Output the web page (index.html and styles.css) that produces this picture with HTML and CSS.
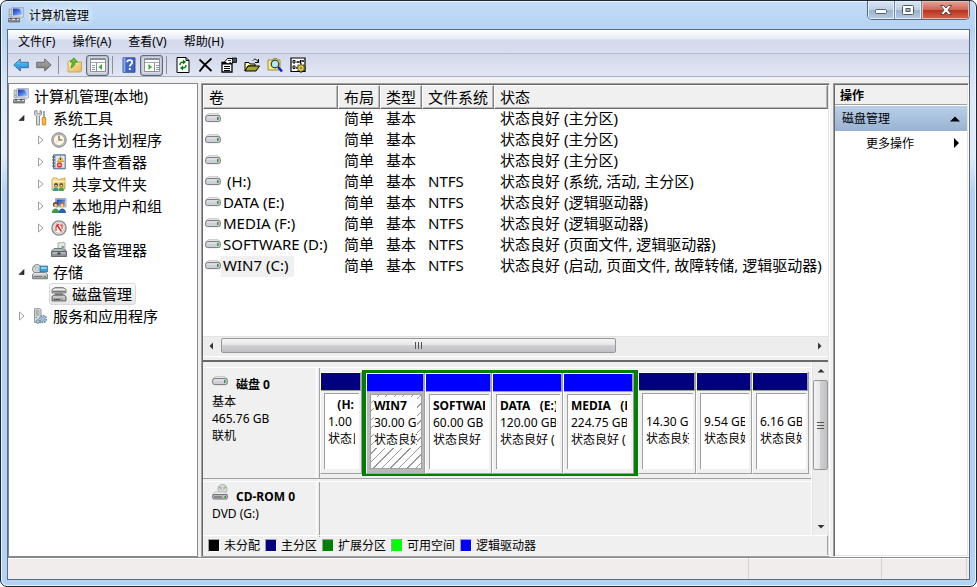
FILE: index.html
```html
<!DOCTYPE html>
<html lang="zh-CN">
<head>
<meta charset="utf-8">
<title>计算机管理</title>
<link rel="stylesheet" href="styles.css">
</head>
<body>
<svg class="sprite" aria-hidden="true">
  <defs>
    <linearGradient id="gBlue" x1="0" y1="0" x2="1" y2="1"><stop offset="0" stop-color="#1530b8"/><stop offset=".5" stop-color="#4a78e0"/><stop offset="1" stop-color="#c8dcff"/></linearGradient>
    <linearGradient id="gArrow" x1="0" y1="0" x2="0" y2="1"><stop offset="0" stop-color="#8fd8fa"/><stop offset=".5" stop-color="#3ba7e6"/><stop offset="1" stop-color="#2f8fd6"/></linearGradient>
    <linearGradient id="gGrey" x1="0" y1="0" x2="0" y2="1"><stop offset="0" stop-color="#b0b0b0"/><stop offset="1" stop-color="#777"/></linearGradient>
    <linearGradient id="gFolder" x1="0" y1="0" x2="1" y2="1"><stop offset="0" stop-color="#fdeeb0"/><stop offset="1" stop-color="#e3b95a"/></linearGradient>
    <linearGradient id="gMetal" x1="0" y1="0" x2="0" y2="1"><stop offset="0" stop-color="#f4f4f6"/><stop offset="1" stop-color="#8c8f94"/></linearGradient>
  </defs>
  <symbol id="computer" viewBox="0 0 16 16">
    <path d="M1 2h3v8H1z" fill="#c9ccd0" stroke="#8a8d92" stroke-width=".6"/><path d="M1.500 7h1v1h-1z" fill="#3b3"/>
    <path d="M4 .5h11.500v9.500H4z" fill="#e4e6ea" stroke="#9a9ea6" stroke-width=".7"/><path d="M5 1.500h9.500v7H5z" fill="url(#gBlue)"/>
    <path d="M11 1.500h3.500v5z" fill="#dfe9ff" opacity=".7"/><path d="M8 10h5l1 1.500H7z" fill="#b9bcc2"/>
    <path d="M.5 11.500h11V15H.5z" fill="#85888c" stroke="#5c5f63" stroke-width=".7"/><path d="M1 12.500h10" stroke="#e2e2e2"/><path d="M3 11v2M8 11v2" stroke="#333"/>
  </symbol>
  <symbol id="tools" viewBox="0 0 16 16">
    <path d="M2.500 1v3.500L4.500 6v9h3V6l2-1.500V1L8 .5v3.300H5V.5z" fill="#d9dbde" stroke="#777b80" stroke-width=".8"/>
    <path d="M12 1v7" stroke="#8a8d92" stroke-width="1.600"/><path d="M10.500 7.500h3L14 9l-.5 6h-3L10 9z" fill="#f3b73b" stroke="#b67a12" stroke-width=".7"/>
  </symbol>
  <symbol id="clock" viewBox="0 0 16 16">
    <circle cx="8" cy="8" r="7.300" fill="#bfc1c4" stroke="#77797d" stroke-width=".8"/><circle cx="8" cy="8" r="5.600" fill="#fff8e2" stroke="#8d8a80" stroke-width=".6"/>
    <path d="M8 3.500V8h3.500" fill="none" stroke="#555" stroke-width="1.100"/><path d="M8 8l-3 2.500" stroke="#c99" stroke-width=".6"/>
  </symbol>
  <symbol id="events" viewBox="0 0 16 16">
    <path d="M2.500.8h11.700v14H2.500z" fill="#a9bdd8" stroke="#4d6894"/><path d="M5 2h8.500v11.500H5z" fill="#dfe7f2"/><path d="M1 3h3M1 6h3M1 9h3M1 12h3" stroke="#555"/>
    <path d="M9.500 2.500l3 5h-6z" fill="#ffd63a" stroke="#a97b00" stroke-width=".6"/><path d="M9.500 4v2" stroke="#222" stroke-width=".8"/>
    <circle cx="8.500" cy="11" r="2.700" fill="#df3a2c"/><path d="M7.500 10l2 2m0-2l-2 2" stroke="#fff" stroke-width=".8"/>
  </symbol>
  <symbol id="shared" viewBox="0 0 16 16">
    <path d="M1 4l1-2h4l1.500 1.500L14 2v11L1 14z" fill="url(#gFolder)" stroke="#c79b3d" stroke-width=".8"/><path d="M2 5.500h12.500" stroke="#fff3c4"/>
    <circle cx="5" cy="9" r="1.900" fill="#4b3a26"/><path d="M2 15c0-5 5.500-5 5.500 0z" fill="#2f9a9a"/><circle cx="10.200" cy="9" r="1.900" fill="#6b4a26"/><path d="M7.700 15c0-5 5.300-5 5.300 0z" fill="#4aa34a"/><circle cx="5" cy="9.800" r="1" fill="#f3cfa4"/><circle cx="10.200" cy="9.800" r="1" fill="#f3cfa4"/>
  </symbol>
  <symbol id="users" viewBox="0 0 16 16">
    <path d="M4.500.5H15v8.500H4.500z" fill="#d9dce2" stroke="#8a8f99" stroke-width=".7"/><path d="M5.500 1.500H14v6.500H5.500z" fill="url(#gBlue)"/>
    <circle cx="4.500" cy="6.500" r="2.600" fill="#6b4423"/><circle cx="4.700" cy="7.300" r="1.600" fill="#f0c79a"/><path d="M.8 15c0-6 7.500-6 7.500 0z" fill="#3f9b46"/>
    <circle cx="11" cy="6.500" r="2.600" fill="#a7742f"/><circle cx="11" cy="7.400" r="1.600" fill="#f6d3a8"/><path d="M7.500 15c0-6 7.500-6 7.500 0z" fill="#2c62b5"/>
  </symbol>
  <symbol id="gauge" viewBox="0 0 16 16">
    <circle cx="8" cy="8" r="7.100" fill="#eee" stroke="#85878a" stroke-width="1.400"/><circle cx="8" cy="8" r="5.200" fill="#fff" stroke="#c9a8a4" stroke-width=".8"/>
    <path d="M5.500 4.500l5 7" stroke="#d22" stroke-width="1.500"/><path d="M5 11V6.500l3-2.500M8.500 5h2.500V9" fill="none" stroke="#d22" stroke-width="1.100"/>
  </symbol>
  <symbol id="device" viewBox="0 0 16 16">
    <path d="M7 1l4-1 3 1v7H7z" fill="#e4e5e8" stroke="#8b8d91" stroke-width=".7"/><path d="M10.500 5h2.500" stroke="#3aa648" stroke-width="1.500"/>
    <path d="M1 8.500l2-2h8l4 2v2H1z" fill="#b3b8bd" stroke="#5f646a" stroke-width=".8"/><path d="M.5 9.500h15v5H.5z" fill="#8c9298" stroke="#4e5358" stroke-width=".8"/><path d="M1.500 11h13" stroke="#d4d7db"/><path d="M6.500 10.500h3v2h-3z" fill="#444"/>
  </symbol>
  <symbol id="storage" viewBox="0 0 16 16">
    <circle cx="5" cy="5" r="4.500" fill="#d5d8dc" stroke="#888"/><circle cx="5" cy="5" r="1.400" fill="#fff" stroke="#888" stroke-width=".6"/><path d="M2 2l2 2" stroke="#4c9"/>
    <path d="M8 2h7.500v6H8z" fill="#39a0dc" stroke="#246b9c" stroke-width=".7"/><path d="M9 4h5.500" stroke="#b4e3fa" stroke-width="1.500"/>
    <path d="M.5 10.500l2-2h11l2 2v4.300H.5z" fill="url(#gMetal)" stroke="#6c6f74" stroke-width=".8"/><path d="M2 12.500h8" stroke="#777"/><path d="M12 12h2v1.500h-2z" fill="#35b035"/>
  </symbol>
  <symbol id="diskmgmt" viewBox="0 0 16 16">
    <path d="M1 3.500l3-2h8l3 2V7H1z" fill="#c4c4c4" stroke="#6a6a6a" stroke-width=".8"/><path d="M2 3.500h12" stroke="#f2f2f2" stroke-width=".9"/><path d="M1.500 5.500h13" stroke="#777"/>
    <path d="M4 7h8v2.500H4z" fill="#888"/><path d="M1 10.500l2-1.500h10l2 1.500V15H1z" fill="#a2a2a2" stroke="#5a5a5a" stroke-width=".8"/><path d="M2 11h12" stroke="#efefef"/><path d="M3 13.500h6" stroke="#555"/><path d="M12 13h2" stroke="#ddd"/>
  </symbol>
  <symbol id="services" viewBox="0 0 16 16">
    <path d="M2.500.8l5-.3 1.500 1v13H2.500z" fill="#d8dce0" stroke="#7e8388" stroke-width=".8"/><path d="M3.500 3h4M3.500 5h4M3.500 7h4" stroke="#8a8f95"/><path d="M3.500 9.500h1.500" stroke="#3b3"/>
    <circle cx="11" cy="11" r="3.400" fill="#b6cde0" stroke="#5f84a5" stroke-width="1.500" stroke-dasharray="1.600 1"/><circle cx="11" cy="11" r="1.300" fill="#fff" stroke="#5f84a5" stroke-width=".8"/><circle cx="6" cy="13.500" r="1.800" fill="#aec5d6" stroke="#6c8ea8"/>
  </symbol>
  <symbol id="drive" viewBox="0 0 16 10">
    <path d="M3 .8h10l2 2H1z" fill="#f2f2f2" stroke="#b0b0b4" stroke-width=".8"/><rect x=".6" y="2.600" width="14.800" height="6" rx="2" fill="#cfcfd8" stroke="#77777c" stroke-width="1"/><path d="M2 4h11" stroke="#eeeef4"/><path d="M12 4h1.600v3H12z" fill="#2f9a2f"/>
  </symbol>
  <symbol id="cdrom" viewBox="0 0 16 16">
    <circle cx="10.500" cy="5" r="4.500" fill="#dcdce0" stroke="#99999e" stroke-width=".8"/><path d="M7 3l3 2M11 5l3-2" stroke="#6c6" stroke-width="1.200"/><circle cx="10.500" cy="5" r="1.300" fill="#fff" stroke="#999" stroke-width=".6"/>
    <path d="M3 8h10l2.500 2.500H.5z" fill="#eee" stroke="#aaa" stroke-width=".6"/><rect x=".6" y="10.500" width="14.800" height="4.500" rx="1.500" fill="#bbbbc2" stroke="#707075"/><path d="M2 13h8" stroke="#555"/><path d="M12.500 12h1.500v2h-1.500z" fill="#2f9a2f"/>
  </symbol>
  <symbol id="back" viewBox="0 0 16 14"><path d="M.8 7l6.500-6v3.300h8v5.400h-8V13z" fill="url(#gArrow)" stroke="#2a6da8" stroke-width=".9"/></symbol>
  <symbol id="forward" viewBox="0 0 16 14"><path d="M15.200 7L8.700 1v3.300h-8v5.400h8V13z" fill="url(#gGrey)" stroke="#666" stroke-width=".9"/></symbol>
  <symbol id="up" viewBox="0 0 16 16"><path d="M1 5l1-1.500h4L7 5h7.500v9L13 15H1z" fill="url(#gFolder)" stroke="#c79b3d" stroke-width=".8"/><path d="M4 11c2.500-1 4-3 4-6h2.500L6.800.8 3 5h2.200c0 2-.4 4-1.200 6z" fill="#5bc236" stroke="#2f8a1a" stroke-width=".7"/></symbol>
  <symbol id="paneLeft" viewBox="0 0 18 16"><path d="M1.500 1.500h15v13h-15z" fill="#fff" stroke="#8a8f98"/><path d="M1.500 2.500h15" stroke="#8a8f98"/><path d="M2 5.500h14" stroke="#a3a8b0"/><path d="M7.500 6v8" stroke="#8a8f98"/><path d="M3 8.500h3M3 10.500h3M3 12.500h3" stroke="#7f9ab8"/><path d="M13 7v6l-3.500-3z" fill="#3aa82d"/></symbol>
  <symbol id="paneRight" viewBox="0 0 18 16"><path d="M1.500 1.500h15v13h-15z" fill="#fff" stroke="#8a8f98"/><path d="M1.500 2.500h15" stroke="#8a8f98"/><path d="M2 5.500h14" stroke="#a3a8b0"/><path d="M11.500 6v8" stroke="#8a8f98"/><path d="M13 8.500h3M13 10.500h3M13 12.500h3" stroke="#7f9ab8"/><path d="M5.500 7v6L9 10z" fill="#3aa82d"/></symbol>
  <symbol id="help" viewBox="0 0 16 16"><path d="M2 .8h12v14.500H2z" fill="#3f67c9" stroke="#27418f" stroke-width=".8"/><path d="M2.500 1h1.800v14H2.500z" fill="#8fb0f2"/><path d="M6.200 5.300c0-3 5-3 5 0C11.200 7.500 8.800 7.300 8.800 9.500M8.800 11v2" fill="none" stroke="#fff" stroke-width="1.800"/></symbol>
  <symbol id="refresh" viewBox="0 0 16 16"><path d="M2 .5h9L14 3.500v12H2z" fill="#fff" stroke="#000"/><path d="M11 .5v3h3" fill="none" stroke="#000"/><path d="M5 8c0-2.500 1-3 4-3M11 8c0 2.500-1 3-4 3" fill="none" stroke="#008000" stroke-width="1.500"/><path d="M8 2.500v5L11 5zM8 8.500v5L5 11z" fill="#008000"/></symbol>
  <symbol id="delete" viewBox="0 0 16 16"><path d="M1.500 2.500l12 11.500M13.500 1.500C9 5 5 9.500 1.500 14.500" fill="none" stroke="#000" stroke-width="1.800"/></symbol>
  <symbol id="props" viewBox="0 0 16 16"><path d="M1 5.500h10v9.500H1z" fill="#fff" stroke="#000" stroke-width="1.300"/><path d="M1 6.500h10" stroke="#000" stroke-width="2"/><path d="M3 9.500h6M3 11.500h6M3 13.500h6" stroke="#000"/><path d="M3.500 5l3-3.500h5l1 2-2 3.500-1-1.500L7 7z" fill="#fff" stroke="#000" stroke-width="1"/><path d="M7 3.500h3" stroke="#000" stroke-width=".8"/><path d="M11 1h4.500v4.500H12z" fill="#4a4e66" stroke="#000" stroke-width=".8"/></symbol>
  <symbol id="open" viewBox="0 0 16 16"><path d="M1 14V5.500h4L6 7h5v2H4z" fill="#ffff9a" stroke="#000"/><path d="M1 14l3-5h11.500L12 14z" fill="#a6a62c" stroke="#000"/><path d="M9 3.500c2-2.500 4-1 5 1.500M14.500 2v3.500H11" fill="none" stroke="#000"/></symbol>
  <symbol id="search" viewBox="0 0 16 16"><path d="M1 3h4l1.500-1.500H10L11 3h2v10H1z" fill="#ffee7d" stroke="#998f35"/><circle cx="8" cy="7" r="3.800" fill="#a8ecff" stroke="#333" stroke-width="1.200"/><path d="M11 10l4 4.500" stroke="#1023c4" stroke-width="2.500"/></symbol>
  <symbol id="settings" viewBox="0 0 16 16"><path d="M1 1h14v13.500H1z" fill="#fff" stroke="#000" stroke-width="1.200"/><path d="M3 3.500h2v2.500H3zM3 9h2v2.500H3z" fill="none" stroke="#000"/><path d="M6.500 5h3M10.500 3v3.500M11.500 4h2.500M6.500 10.500h2" stroke="#000" stroke-width="1.300"/><path d="M11 6.500v9M6.500 11h9M8 8l6 6M14 8l-6 6" stroke="#000" stroke-width="2.200"/><path d="M11 7.200v7.600M7.200 11h7.600M8.500 8.500l5 5M13.500 8.500l-5 5" stroke="#ffe640" stroke-width="1.200"/><circle cx="11" cy="11" r="2.600" fill="#ffe640"/><circle cx="11" cy="11" r="1.100" fill="#fff" stroke="#443c00" stroke-width=".7"/></symbol>
  <symbol id="closed" viewBox="0 0 8 10"><path d="M1.500 1l4.500 4-4.500 4z" fill="#fff" stroke="#a0a0a0"/></symbol>
  <symbol id="opened" viewBox="0 0 8 10"><path d="M6 2.500v5H1z" fill="#333" stroke="#111" stroke-width=".6"/></symbol>
  <symbol id="triL" viewBox="0 0 8 8"><path d="M5 .5v7L1.500 4z" fill="#333"/></symbol>
  <symbol id="triR" viewBox="0 0 8 8"><path d="M3 .5v7L6.500 4z" fill="#333"/></symbol>
  <symbol id="triU" viewBox="0 0 8 8"><path d="M.5 5.500h7L4 2z" fill="#333"/></symbol>
  <symbol id="triD" viewBox="0 0 8 8"><path d="M.5 3h7L4 6.500z" fill="#333"/></symbol>
</svg>

<div class="window">
  <header class="titlebar">
    <svg class="i16"><use href="#computer"/></svg>
    <h1>计算机管理</h1>
    <div class="caption">
      <button class="min" aria-label="最小化"><svg viewBox="0 0 14 12"><rect x="1.500" y="5.500" width="11" height="4" rx="1" fill="#fff" stroke="#555b68"/></svg></button>
      <button class="max" aria-label="最大化"><svg viewBox="0 0 14 12"><rect x="1.500" y="1.500" width="11" height="9" rx="1" fill="#fff" stroke="#555b68"/><rect x="5" y="4.500" width="4" height="3" fill="#9fb4cc" stroke="#555b68"/></svg></button>
      <button class="close" aria-label="关闭"><svg viewBox="0 0 14 12"><path d="M1.500 1.500h3L7 4l2.500-2.500h3L9 6l3.500 4.500h-3L7 8l-2.500 2.500h-3L5 6z" fill="#fff" stroke="#5a3a40" stroke-width=".9"/></svg></button>
    </div>
  </header>

  <div class="client">
    <nav class="menubar"><button>文件(F)</button><button>操作(A)</button><button>查看(V)</button><button>帮助(H)</button></nav>

    <div class="toolbar">
      <button aria-label="后退"><svg class="i16"><use href="#back"/></svg></button>
      <button aria-label="前进"><svg class="i16"><use href="#forward"/></svg></button>
      <i class="sep"></i>
      <button aria-label="上一级"><svg class="i16"><use href="#up"/></svg></button>
      <button class="on" aria-label="显示控制台树"><svg class="i18"><use href="#paneLeft"/></svg></button>
      <i class="sep"></i>
      <button aria-label="帮助"><svg class="i16"><use href="#help"/></svg></button>
      <button class="on" aria-label="显示操作窗格"><svg class="i18"><use href="#paneRight"/></svg></button>
      <i class="sep"></i>
      <button aria-label="刷新"><svg class="i16"><use href="#refresh"/></svg></button>
      <button aria-label="删除"><svg class="i16"><use href="#delete"/></svg></button>
      <button aria-label="属性"><svg class="i16"><use href="#props"/></svg></button>
      <button aria-label="打开"><svg class="i16"><use href="#open"/></svg></button>
      <button aria-label="查找"><svg class="i16"><use href="#search"/></svg></button>
      <button aria-label="设置"><svg class="i16"><use href="#settings"/></svg></button>
    </div>

    <main class="panes">
      <aside class="tree">
        <ul class="root">
          <li><div class="row"><span class="node"><svg class="i16"><use href="#computer"/></svg>计算机管理(本地)</span></div>
            <ul class="lv1">
              <li><div class="row"><svg class="arrow"><use href="#opened"/></svg><span class="node"><svg class="i16"><use href="#tools"/></svg>系统工具</span></div>
                <ul class="lv2">
                  <li class="row"><svg class="arrow"><use href="#closed"/></svg><span class="node"><svg class="i16"><use href="#clock"/></svg>任务计划程序</span></li>
                  <li class="row"><svg class="arrow"><use href="#closed"/></svg><span class="node"><svg class="i16"><use href="#events"/></svg>事件查看器</span></li>
                  <li class="row"><svg class="arrow"><use href="#closed"/></svg><span class="node"><svg class="i16"><use href="#shared"/></svg>共享文件夹</span></li>
                  <li class="row"><svg class="arrow"><use href="#closed"/></svg><span class="node"><svg class="i16"><use href="#users"/></svg>本地用户和组</span></li>
                  <li class="row"><svg class="arrow"><use href="#closed"/></svg><span class="node"><svg class="i16"><use href="#gauge"/></svg>性能</span></li>
                  <li class="row"><svg class="arrow"></svg><span class="node"><svg class="i16"><use href="#device"/></svg>设备管理器</span></li>
                </ul>
              </li>
              <li><div class="row"><svg class="arrow"><use href="#opened"/></svg><span class="node"><svg class="i16"><use href="#storage"/></svg>存储</span></div>
                <ul class="lv2">
                  <li class="row"><svg class="arrow"></svg><span class="node selected"><svg class="i16"><use href="#diskmgmt"/></svg>磁盘管理</span></li>
                </ul>
              </li>
              <li class="row"><svg class="arrow"><use href="#closed"/></svg><span class="node"><svg class="i16"><use href="#services"/></svg>服务和应用程序</span></li>
            </ul>
          </li>
        </ul>
      </aside>

      <section class="centre">
        <div class="volumes">
          <table>
            <colgroup><col class="c-name"><col class="c-s"><col class="c-s"><col class="c-fs"><col></colgroup>
            <thead><tr><th>卷</th><th>布局</th><th>类型</th><th>文件系统</th><th>状态</th></tr></thead>
            <tbody>
              <tr><td><svg class="drive"><use href="#drive"/></svg></td><td>简单</td><td>基本</td><td></td><td>状态良好 (主分区)</td></tr>
              <tr><td><svg class="drive"><use href="#drive"/></svg></td><td>简单</td><td>基本</td><td></td><td>状态良好 (主分区)</td></tr>
              <tr><td><svg class="drive"><use href="#drive"/></svg></td><td>简单</td><td>基本</td><td></td><td>状态良好 (主分区)</td></tr>
              <tr><td><svg class="drive"><use href="#drive"/></svg><span> (H:)</span></td><td>简单</td><td>基本</td><td>NTFS</td><td>状态良好 (系统, 活动, 主分区)</td></tr>
              <tr><td><svg class="drive"><use href="#drive"/></svg><span>DATA (E:)</span></td><td>简单</td><td>基本</td><td>NTFS</td><td>状态良好 (逻辑驱动器)</td></tr>
              <tr><td><svg class="drive"><use href="#drive"/></svg><span>MEDIA (F:)</span></td><td>简单</td><td>基本</td><td>NTFS</td><td>状态良好 (逻辑驱动器)</td></tr>
              <tr><td><svg class="drive"><use href="#drive"/></svg><span>SOFTWARE (D:)</span></td><td>简单</td><td>基本</td><td>NTFS</td><td>状态良好 (页面文件, 逻辑驱动器)</td></tr>
              <tr><td><svg class="drive"><use href="#drive"/></svg><span class="picked">WIN7 (C:)</span></td><td>简单</td><td>基本</td><td>NTFS</td><td>状态良好 (启动, 页面文件, 故障转储, 逻辑驱动器)</td></tr>
            </tbody>
          </table>
        </div>
        <div class="hscroll">
          <svg class="tri"><use href="#triL"/></svg>
          <div class="htrack"><div class="hthumb"><i></i><i></i><i></i></div></div>
          <svg class="tri"><use href="#triR"/></svg>
        </div>
        <div class="splitter"></div>

        <div class="lower">
          <div class="disks">
            <div class="disk">
              <div class="info">
                <div class="name"><svg class="drive"><use href="#drive"/></svg><b>磁盘 0</b></div>
                <div>基本</div><div>465.76 GB</div><div>联机</div>
              </div>
              <div class="parts">
                <div class="part primary"><div class="box"><b>   (H:</b><span>1.00</span><span>状态良</span></div></div>
                <div class="extended">
                  <div class="part hatched"><div class="box"><b>WIN7</b><span>30.00 GB</span><span>状态良好</span></div></div>
                  <div class="part"><div class="box"><b>SOFTWARE</b><span>60.00 GB</span><span>状态良好</span></div></div>
                  <div class="part"><div class="box"><b>DATA   (E:)</b><span>120.00 GB</span><span>状态良好 (</span></div></div>
                  <div class="part"><div class="box"><b>MEDIA   (F:)</b><span>224.75 GB</span><span>状态良好 (</span></div></div>
                </div>
                <div class="part primary"><div class="box"><b> </b><span>14.30 GB</span><span>状态良好</span></div></div>
                <div class="part primary"><div class="box"><b> </b><span>9.54 GB</span><span>状态良好</span></div></div>
                <div class="part primary"><div class="box"><b> </b><span>6.16 GB</span><span>状态良好</span></div></div>
              </div>
            </div>
            <div class="disk last">
              <div class="info">
                <div class="name"><svg class="i16"><use href="#cdrom"/></svg><b>CD-ROM 0</b></div>
                <div>DVD (G:)</div>
              </div>
            </div>
          </div>
          <div class="vscroll">
            <svg class="tri"><use href="#triU"/></svg>
            <div class="vtrack"><div class="vthumb"><i></i><i></i><i></i></div></div>
            <svg class="tri"><use href="#triD"/></svg>
          </div>
        </div>
        <ul class="legend">
          <li><i class="k-un"></i>未分配</li><li><i class="k-pr"></i>主分区</li><li><i class="k-ex"></i>扩展分区</li><li><i class="k-fr"></i>可用空间</li><li><i class="k-lo"></i>逻辑驱动器</li>
        </ul>
      </section>

      <aside class="actions">
        <h2>操作</h2>
        <button class="group">磁盘管理<svg viewBox="0 0 10 10"><path d="M0 7.500h10L5 2.500z"/></svg></button>
        <button class="item">更多操作<svg viewBox="0 0 10 10"><path d="M3 0v10l5-5z"/></svg></button>
      </aside>
    </main>

    <footer class="status"><span></span><span></span><span></span></footer>
  </div>
</div>
</body>
</html>
```
FILE: styles.css
```css
* { box-sizing: border-box; }
html, body { height: 100%; margin: 0; }
body {
  background: #fff;
  color: #000;
  font: 12px/17px "Noto Sans", "Noto Sans CJK SC", sans-serif;
  overflow: hidden;
}
ul { list-style: none; margin: 0; padding: 0; }
button { font: inherit; color: inherit; border: 0; padding: 0; background: none; }
svg { flex: none; display: block; }
.sprite { position: absolute; width: 0; height: 0; }
.i16 { width: 16px; height: 16px; }
.i18 { width: 18px; height: 16px; }
.drive { width: 16px; height: 10px; }

/* window frame */
.window {
  height: 100vh;
  display: flex;
  flex-direction: column;
  padding: 0 6px 6px;
  border: 1px solid #1d2530;
  border-radius: 7px;
  background: linear-gradient(#c4dcf6, #b5d3f5 28px, #dbe9f8 90px, #e0ecf9 155px, #b3d3f6 190px, #b3d3f6);
  box-shadow: inset 0 0 0 1px #e8f4ff;
}
.titlebar {
  height: 28px;
  flex: none;
  display: flex;
  align-items: center;
  gap: 5px;
  padding-left: 1px;
}
.titlebar h1 { flex: 1; margin: 0; font-size: 12px; font-weight: 400; text-shadow: 0 0 8px #fff, 0 0 8px #fff; }
.caption { align-self: flex-start; display: flex; border: 1px solid #56697e; border-top: 0; border-radius: 0 0 5px 5px; overflow: hidden; }
.caption button { width: 27px; height: 18px; display: grid; place-items: center; border-right: 1px solid #7187a0; background: linear-gradient(#dbe7f4, #bdd0e5 48%, #98b1cd 50%, #b9cde4); box-shadow: inset 0 0 0 1px #e5f0fb; }
.caption .close { width: 47px; border: 0; background: linear-gradient(#e5a79a, #cf6656 48%, #b8301d 50%, #d2684b); box-shadow: inset 0 0 0 1px #efb9aa; }
.caption svg { width: 14px; height: 12px; }

.client {
  flex: 1;
  min-height: 0;
  display: flex;
  flex-direction: column;
  border: 1px solid #5d6b7d;
  background: #f0f0f0;
}
.menubar {
  height: 24px;
  flex: none;
  display: flex;
  gap: 1px;
  padding-left: 2px;
  border-bottom: 1px solid #b6bccc;
  background: linear-gradient(#fff, #e8ebf5 9px, #d4daec 10px, #d8def0);
}
.menubar button { padding: 0 8px; }
.toolbar {
  height: 23px;
  flex: none;
  display: flex;
  align-items: center;
  padding-left: 1px;
  border-bottom: 1px solid #a9b0c0;
  background: linear-gradient(#d3d9eb, #e2e6f4);
}
.toolbar button { width: 23px; height: 21px; display: grid; place-items: center; border-radius: 3px; }
.toolbar .on { border: 1px solid #5f6878; background: #d3d8e4; box-shadow: inset 0 0 2px #777f8f; }
.toolbar .sep { width: 8px; height: 18px; background: linear-gradient(#8b909c, #8b909c) 3px 0 / 1px 100% no-repeat; }

.panes {
  flex: 1;
  min-height: 0;
  display: grid;
  grid-template-columns: 190px minmax(0, 1fr) 136px;
  gap: 3px;
  padding-top: 6px;
}

/* console tree */
.tree { border: 1px solid #828790; background: #fff; padding-top: 1px; font-size: 15px; line-height: 20px; overflow: hidden; }
.root { padding-left: 2px; }
.lv1 { padding-left: 6px; }
.lv2 { padding-left: 19px; }
.row { height: 22px; display: flex; align-items: center; white-space: nowrap; }
.arrow { width: 8px; height: 10px; margin: 0 4px 0 1px; }
.node { display: flex; align-items: center; gap: 5px; height: 22px; padding: 0 3px 0 1px; border: 1px solid transparent; border-radius: 3px; }
.node.selected { border-color: #d9d9d9; background: linear-gradient(#fafafa, #e6e6e6); }

/* centre */
.centre {
  display: flex;
  flex-direction: column;
  min-height: 0;
  padding: 1px;
  border: 1px solid #a0a0a0;
  border-right-color: #fff;
  border-bottom-color: #a0a0a0;
  box-shadow: inset 1px 1px #696969, inset -1px 0 #e3e3e3;
}
.volumes { flex: 1; min-height: 0; background: #fff; overflow: hidden; }
table { width: 100%; table-layout: fixed; border-collapse: separate; border-spacing: 0; font-size: 15px; line-height: 20px; }
.c-name { width: 135px; }
.c-s { width: 42px; }
.c-fs { width: 72px; }
th {
  height: 24px;
  padding: 0 0 0 5px;
  font-weight: 400;
  text-align: left;
  background: #f0f0f0;
  border: 1px solid #fff;
  border-right-color: #808080;
  border-bottom-color: #696969;
  box-shadow: inset -1px -1px #b8b8b8;
}
td { height: 21px; padding: 0 0 2px 6px; line-height: 19px; white-space: nowrap; }
td:first-child { display: flex; padding: 0 0 0 2px; white-space: pre; }
td:first-child span { padding: 0 6px 0 2px; height: 21px; }
td .drive { margin-top: 4px; }
.picked { background: #f0f0f0; }

.hscroll { height: 20px; flex: none; display: flex; align-items: center; padding-bottom: 2px; background: #ededed; border-top: 1px solid #e3e3e3; }
.tri { width: 8px; height: 8px; margin: 5px; }
.htrack { flex: 1; }
.hthumb { width: 67%; height: 15px; display: flex; align-items: center; justify-content: center; gap: 2px; border: 1px solid #979797; border-radius: 2px; background: linear-gradient(#f4f4f4, #e6e6e6 48%, #d0d0d3 50%, #c0c0c4); }
.hthumb i { width: 1px; height: 7px; background: #555; }
.splitter { height: 6px; flex: none; border-top: 1px solid #fff; border-bottom: 2px solid #696969; background: #f0f0f0; }

.lower { height: 173px; flex: none; display: flex; background: #f0f0f0; }
.disks { flex: 1; min-width: 0; padding-top: 5px; border-right: 1px solid #fff; }
.disk { height: 112px; display: flex; border-top: 1px solid #fff; border-bottom: 1px solid #a0a0a0; }
.disk.last { height: 56px; border-bottom: 0; margin-top: 2px; }
.info { width: 117px; flex: none; padding: 8px 0 0 9px; border-right: 1px solid #a0a0a0; box-shadow: inset -2px 0 #f0f0f0, inset -3px 0 #fff; }
.last .info { padding-top: 6px; }
.name { display: flex; gap: 8px; }
.last .i16 { margin-top: -4px; }

/* partition map: columns follow the drawn share of each partition */
.parts { flex: 1; min-width: 0; display: grid; grid-template-columns: 42fr 276fr 58fr 56fr 57fr; padding: 2px 2px 2px 0; }
.part { display: flex; flex-direction: column; min-width: 0; margin: 2px 0; padding: 0 2px 4px 3px; border-left: 1px solid #fff; border-right: 1px solid #a0a0a0; border-bottom: 1px solid #a0a0a0; }
.part::before { content: ""; flex: none; height: 17px; margin: 0 -2px 2px -3px; border-top: 1px solid #fff; border-right: 1px solid #a0a0a0; border-bottom: 1px solid #a0a0a0; background: #00f; }
.primary::before { background: #000080; }
.extended { min-width: 0; display: grid; grid-template-columns: 59fr 67fr 71fr 71fr; border: solid #008000; border-width: 3px 4px 2px; }
.extended .part { margin: 0; }
.box { flex: 1; min-height: 0; overflow: hidden; padding: 2px 4px 0 3px; border: solid #a0a0a0; border-width: 1px 0 0 1px; background: #fff; white-space: pre; }
.box b, .box span { display: block; overflow: hidden; }
.hatched { background: #b8b8b8; }
.hatched .box {
  border-width: 1px;
  background: repeating-linear-gradient(135deg, #fff 0 5px, #999 5px 6px);
}
.hatched b, .hatched span { background: #fff; }

.vscroll { width: 16px; flex: none; display: flex; flex-direction: column; align-items: center; background: #ededed; border-left: 1px solid #e3e3e3; }
.vtrack { flex: 1; align-self: stretch; }
.vthumb { height: 66%; display: flex; flex-direction: column; align-items: center; justify-content: center; gap: 2px; border: 1px solid #979797; border-radius: 2px; background: linear-gradient(90deg, #f4f4f4, #e6e6e6 48%, #d0d0d3 50%, #c0c0c4); }
.vthumb i { width: 7px; height: 1px; background: #555; }

.legend { height: 20px; flex: none; display: flex; align-items: center; gap: 5px; padding-left: 5px; border-top: 1px solid #fff; border-right: 1px solid #a0a0a0; }
.legend li { display: flex; align-items: center; gap: 4px; }
.legend i { width: 12px; height: 13px; border: 1px solid #a0a0a0; border-right-color: #fff; border-bottom-color: #fff; }
.k-un { background: #000; }
.k-pr { background: #000080; }
.k-ex { background: #008000; }
.k-fr { background: #0f0; }
.k-lo { background: #00f; }

/* actions */
.actions { padding: 1px; border: 1px solid #a0a0a0; border-right-color: #fff; border-bottom-color: #fff; background: #fff; box-shadow: inset 1px 1px #696969, inset -1px -1px #e3e3e3; }
.actions h2 { height: 20px; margin: 0; padding: 2px 5px 0; font-size: 12px; background: #f0f0f0; border-bottom: 1px solid #a0a0a0; }
.actions button { width: 100%; height: 24px; display: flex; align-items: center; justify-content: space-between; text-align: left; }
.actions svg { width: 10px; height: 10px; }
.actions .group { height: 25px; padding: 0 7px; margin-top: 1px; background: linear-gradient(#b9d0e8, #98b2d1); }
.item { padding: 0 6px 0 31px; }

.status { height: 22px; flex: none; display: flex; justify-content: flex-end; border-top: 1px solid #8a8a8a; background: #f1edec; box-shadow: inset 0 1px #fff; }
.status span { width: 133px; border-left: 1px solid #d4d0cf; }
.status span:nth-child(2) { width: 85px; }
.status span:nth-child(3) { width: 3px; }
```
